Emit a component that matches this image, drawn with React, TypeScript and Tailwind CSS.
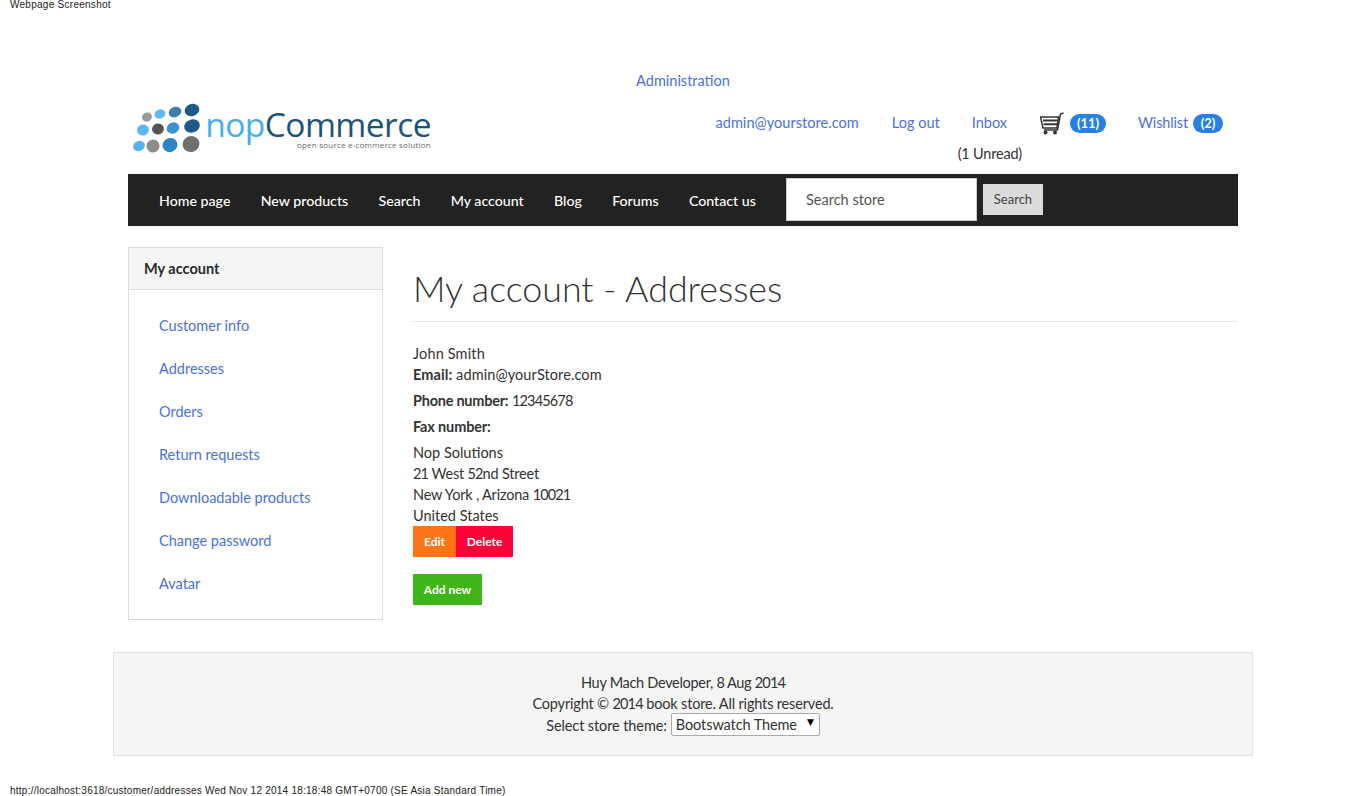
const sans = "font-['Lato','Noto_Sans',sans-serif]";

function Logo() {
  const dots: [number, number, number, number, string][] = [
    [147, 117, 5, 4.5, "#9a9a9a"],
    [160, 114, 5.5, 4.5, "#5cb8f0"],
    [175, 112, 6.5, 5, "#3f7ea6"],
    [192, 110, 7.5, 6, "#1f5a85"],
    [143, 130, 6, 5.5, "#5cb8f0"],
    [158, 129, 6, 5.5, "#555555"],
    [173, 128, 6.5, 5.5, "#3d93cf"],
    [192, 126, 8, 6.5, "#1f5a85"],
    [139, 146, 6, 5, "#55b2ee"],
    [153, 146, 6.5, 6.5, "#8c8c8c"],
    [170, 145, 7.5, 7, "#2a86c5"],
    [191, 144, 8.5, 8, "#707070"],
  ];
  return (
    <div className="flex w-[304px] h-[56px] mt-[5px] shrink-0">
      <svg width="80" height="56" viewBox="128 100 80 56" className="shrink-0">
        {dots.map(([cx, cy, rx, ry, c], i) => (
          <ellipse key={i} cx={cx} cy={cy} rx={rx} ry={ry} fill={c} transform={`rotate(-20 ${cx} ${cy})`} />
        ))}
      </svg>
      <div className="flex flex-col items-end -ml-[1px] w-[224px]">
        <div className="font-['Open_Sans',sans-serif] text-[33.5px] leading-[32px] mt-[8px] tracking-[-0.55px] whitespace-nowrap">
          <span className="text-[#45aeef]">nop</span>
          <span className="text-[#1d5478]">Commerce</span>
        </div>
        <div className="font-['Open_Sans',sans-serif] text-[8px] leading-[8px] mt-[1px] text-[#666b70] tracking-[0.22px] whitespace-nowrap">
          open source e-commerce solution
        </div>
      </div>
    </div>
  );
}

function Cart() {
  return (
    <svg width="24" height="23" viewBox="0 0 24 23" fill="none" stroke="#333">
      <path d="M0.5 5 H18.5 L17 16 H3 Z" strokeWidth="1.5" />
      <path d="M3 8.5 H17.5 M3.7 12.2 H17" strokeWidth="2" />
      <path d="M4 18 H17.5 L20.5 2 L23.5 1" strokeWidth="1.5" />
      <circle cx="5.5" cy="20.5" r="2" fill="#333" stroke="none" />
      <circle cx="15" cy="20.5" r="2" fill="#333" stroke="none" />
    </svg>
  );
}

function Badge({ children, width }: { children: string; width: string }) {
  return (
    <span className={`inline-flex items-center justify-center h-[19px] rounded-full bg-[#2780e3] text-white text-[13px] font-bold ${width}`}>
      {children}
    </span>
  );
}

function Num({ children }: { children: string }) {
  return <span className="tracking-[-0.85px]">{children}</span>;
}

const menu = ["Customer info", "Addresses", "Orders", "Return requests", "Downloadable products", "Change password", "Avatar"];
const nav = ["Home page", "New products", "Search", "My account", "Blog", "Forums", "Contact us"];

export default function App() {
  return (
    <div className={`${sans} w-[1349px] h-[796px] flex flex-col bg-white text-[#333] text-[14.5px] overflow-hidden`}>
      <div className="font-['Liberation_Sans',sans-serif] text-[10px] leading-[10px] text-[#222] pl-[10px] h-[10px] tracking-[0.27px]">
        Webpage Screenshot
      </div>

      <div className="w-[1110px] ml-[128px] mt-[62px] flex flex-col">
        <div className="text-center leading-[18px] text-[#4a72e0]">Administration</div>

        <div className="flex mt-[5px] h-[79px]">
          <Logo />
          <div className="flex-1 flex flex-col items-end pr-[15px]">
            <div className="flex items-center h-[24px] mt-[16px] text-[#4a72e0] whitespace-nowrap">
              <span className="tracking-[0.05px]">admin@yourstore.com</span>
              <span className="ml-[33px]">Log out</span>
              <span className="ml-[32px]">Inbox</span>
              <span className="ml-[33px] flex mt-[1px]"><Cart /></span>
              <span className="ml-[6px]"><Badge width="w-[36px]">(11)</Badge></span>
              <span className="ml-[32px] tracking-[-0.15px]">Wishlist</span>
              <span className="ml-[5px]"><Badge width="w-[30px]">(2)</Badge></span>
            </div>
            <div className="mt-[10px] mr-[201px] leading-[18px] whitespace-nowrap tracking-[-0.2px]">(1 Unread)</div>
          </div>
        </div>

        <div className="h-[52px] bg-[#222] flex items-center pl-[31px] text-white font-medium">
          <div className="flex justify-between w-[597px] pt-[2px] text-[14.2px] whitespace-nowrap">
            {nav.map((n) => <span key={n}>{n}</span>)}
          </div>
          <div className="ml-[30px] -mt-[1px] w-[191px] h-[43px] bg-white border border-[#ccc] flex items-center pl-[19px] pt-[1px] text-[#555] font-normal">
            Search store
          </div>
          <div className="ml-[6px] -mt-[1px] w-[60px] h-[31px] bg-[#dcdcdc] flex items-center justify-center pt-[1px] text-[13px] font-normal text-[#444]">
            Search
          </div>
        </div>

        <div className="flex mt-[21px]">
          <div className="w-[255px] h-[373px] border border-[#ddd] shrink-0">
            <div className="h-[42px] bg-[#f5f5f5] border-b border-[#ddd] flex items-center pl-[15px] font-bold text-[#2a2a2a]">
              My account
            </div>
            <div className="pl-[30px] pt-[14px] flex flex-col text-[#4a72e0]">
              {menu.map((m) => <div key={m} className="h-[43px] flex items-center">{m}</div>)}
            </div>
          </div>

          <div className="ml-[30px] flex-1">
            <div className="h-[75px] border-b border-[#e5e5e5] text-[35.8px] font-light leading-[44px] text-[#333] pt-[20px]">
              My account - Addresses
            </div>
            <div className="mt-[21px] leading-[21px] tracking-[0.15px]">John Smith</div>
            <div className="leading-[21px] tracking-[0.1px]"><b>Email:</b> admin@yourStore.com</div>
            <div className="leading-[21px] mt-[5px]"><b className="tracking-[-0.25px]">Phone number:</b> <Num>12345678</Num></div>
            <div className="leading-[21px] mt-[5px] tracking-[-0.15px]"><b>Fax number:</b></div>
            <div className="leading-[21px] mt-[5px]">Nop Solutions</div>
            <div className="leading-[21px] tracking-[-0.2px]"><Num>21</Num> West <Num>52</Num>nd Street</div>
            <div className="leading-[21px] tracking-[-0.2px]">New York , Arizona <Num>10021</Num></div>
            <div className="leading-[21px]">United States</div>
            <div className="flex text-white text-[12px] font-bold">
              <div className="w-[43px] h-[31px] bg-[#ff7518] flex items-center justify-center">Edit</div>
              <div className="w-[57px] h-[31px] bg-[#ff0039] flex items-center justify-center">Delete</div>
            </div>
            <div className="mt-[17px] w-[69px] h-[31px] bg-[#3fb618] flex items-center justify-center text-white text-[12px] font-bold">
              Add new
            </div>
          </div>
        </div>
      </div>

      <div className="ml-[113px] w-[1140px] h-[104px] mt-[32px] bg-[#f5f5f5] border border-[#e3e3e3] flex flex-col items-center pt-[19px] leading-[21px]">
        <div className="tracking-[-0.3px]">Huy Mach Developer, <Num>8</Num> Aug <Num>2014</Num></div>
        <div className="tracking-[-0.17px]">Copyright © <Num>2014</Num> book store. All rights reserved.</div>
        <div className="flex items-center tracking-[-0.1px]">
          Select store theme:
          <div className="ml-[4px] w-[149px] h-[23px] bg-white border border-[#aaa] rounded-[2px] flex items-center justify-between pl-[4px] pr-[5px] -mt-[1px]">
            <span>Bootswatch Theme</span>
            <span className="text-[9px] leading-[9px] -mt-[5px] text-black font-['DejaVu_Sans',sans-serif]">▼</span>
          </div>
        </div>
      </div>

      <div className="font-['Liberation_Sans',sans-serif] text-[10px] leading-[10px] text-[#222] pl-[10px] mt-[30px] tracking-[0.24px] whitespace-nowrap">
        http://localhost:3618/customer/addresses Wed Nov 12 2014 18:18:48 GMT+0700 (SE Asia Standard Time)
      </div>
    </div>
  );
}
